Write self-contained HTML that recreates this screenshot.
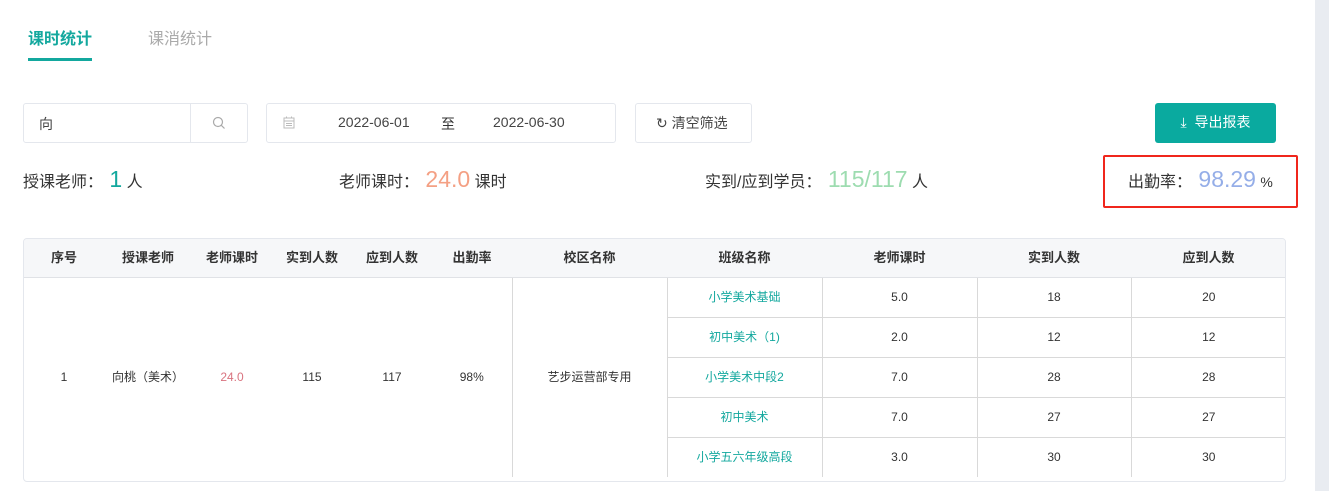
<!DOCTYPE html>
<html><head><meta charset="utf-8"><style>
*{margin:0;padding:0;box-sizing:border-box}
body{width:1329px;height:491px;background:#fff;font-family:"Liberation Sans","Noto Sans CJK SC",sans-serif;position:relative;overflow:hidden;color:#333}
.a{position:absolute}
.sb{left:1315px;top:0;width:14px;height:491px;background:#e9ecf1}
.box{border:1px solid #e4e7ed;border-radius:3px;background:#fff}
table{border-collapse:collapse;font-size:12px;table-layout:fixed}
td,th{text-align:center;height:40px;color:#333;line-height:16px}
th{background:#f6f7f9;font-weight:bold;font-size:13px;height:38px;border-bottom:1px solid #e0e2e6}
.r td{border:1px solid #d9d9d9}
.g{color:#13a89e}
</style></head><body>
<div class="a sb"></div>
<div class="a" style="left:28px;top:25px;font-size:16px;color:#13a89e;font-weight:bold">课时统计</div>
<div class="a" style="left:28px;top:58px;width:64px;height:3px;background:#13a89e"></div>
<div class="a" style="left:148px;top:25px;font-size:16px;color:#aaa">课消统计</div>

<div class="a box" style="left:23px;top:103px;width:225px;height:40px"></div>
<div class="a" style="left:190px;top:104px;width:1px;height:38px;background:#e4e7ed"></div>
<div class="a" style="left:39px;top:114px;font-size:14px;color:#444">向</div>
<svg class="a" style="left:212px;top:116px" width="14" height="14" viewBox="0 0 14 14"><circle cx="6" cy="6" r="4.5" fill="none" stroke="#aaa" stroke-width="1.2"/><path d="M9.3 9.3L12.5 12.5" stroke="#aaa" stroke-width="1.2"/></svg>

<div class="a box" style="left:266px;top:103px;width:350px;height:40px"></div>
<svg class="a" style="left:283px;top:116px" width="12" height="13" viewBox="0 0 12 13"><rect x="1" y="2" width="10" height="10" fill="none" stroke="#bbb"/><path d="M1 5h10M3 7.5h6M3 9.5h6M3.5 0.5v2M8.5 0.5v2" stroke="#bbb"/></svg>
<div class="a" style="left:338px;top:114px;font-size:14px;color:#444">2022-06-01</div>
<div class="a" style="left:441px;top:114px;font-size:14px;color:#333">至</div>
<div class="a" style="left:493px;top:114px;font-size:14px;color:#444">2022-06-30</div>

<div class="a box" style="left:635px;top:103px;width:117px;height:40px"></div>
<div class="a" style="left:656px;top:113px;font-size:14px;color:#444">↻ 清空筛选</div>

<div class="a" style="left:1155px;top:103px;width:121px;height:40px;background:#0aaa9f;border-radius:3px;color:#fff;font-size:14px;line-height:38px;text-align:center">⤓&nbsp; 导出报表</div>

<div class="a" style="left:23px;top:166px;font-size:16px;color:#333">授课老师：<span style="color:#13a89e;font-size:23px">&nbsp;1</span> 人</div>
<div class="a" style="left:339px;top:166px;font-size:16px;color:#333">老师课时：<span style="color:#f4a084;font-size:23px">&nbsp;24.0</span> 课时</div>
<div class="a" style="left:705px;top:166px;font-size:16px;color:#333">实到/应到学员：<span style="color:#9ddcb0;font-size:23px">&nbsp;115/117</span> 人</div>
<div class="a" style="left:1103px;top:155px;width:195px;height:53px;border:2px solid #f0261c;border-radius:2px"></div>
<div class="a" style="left:1128px;top:166px;font-size:16px;color:#333">出勤率：<span style="color:#95aee8;font-size:23px">&nbsp;98.29</span> <span style="font-size:14px">%</span></div>

<div class="a" style="left:23px;top:238px;width:1263px;height:244px;border:1px solid #e4e7ed;border-radius:4px;overflow:hidden">
<table style="width:1262px">
<colgroup><col style="width:80px"><col style="width:88px"><col style="width:80px"><col style="width:80px"><col style="width:80px"><col style="width:80px"><col style="width:155px"><col style="width:155px"><col style="width:155px"><col style="width:154px"><col style="width:155px"></colgroup>
<tr><th>序号</th><th>授课老师</th><th>老师课时</th><th>实到人数</th><th>应到人数</th><th>出勤率</th><th>校区名称</th><th>班级名称</th><th>老师课时</th><th>实到人数</th><th>应到人数</th></tr>
<tr class="r"><td rowspan="5" style="border:none">1</td><td rowspan="5" style="border:none">向桃（美术）</td><td rowspan="5" style="border:none;color:#d9737f">24.0</td><td rowspan="5" style="border:none">115</td><td rowspan="5" style="border:none">117</td><td rowspan="5" style="border:none;border-right:1px solid #d9d9d9">98%</td><td rowspan="5" style="border-bottom:none;border-top:none">艺步运营部专用</td><td class="g" style="border-top:none">小学美术基础</td><td style="border-top:none">5.0</td><td style="border-top:none">18</td><td style="border-top:none;border-right:none">20</td></tr>
<tr class="r"><td class="g">初中美术（1)</td><td>2.0</td><td>12</td><td style="border-right:none">12</td></tr>
<tr class="r"><td class="g">小学美术中段2</td><td>7.0</td><td>28</td><td style="border-right:none">28</td></tr>
<tr class="r"><td class="g">初中美术</td><td>7.0</td><td>27</td><td style="border-right:none">27</td></tr>
<tr class="r"><td class="g" style="border-bottom:none">小学五六年级高段</td><td style="border-bottom:none">3.0</td><td style="border-bottom:none">30</td><td style="border-bottom:none;border-right:none">30</td></tr>
</table>
</div>
</body></html>
